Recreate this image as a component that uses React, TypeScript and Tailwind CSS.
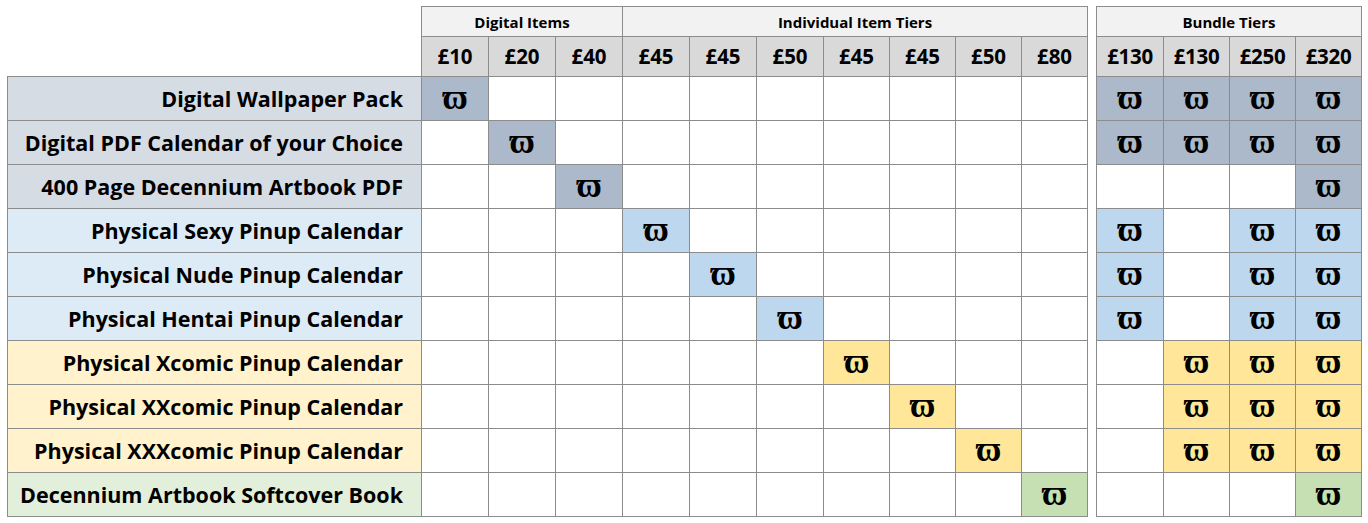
import React from "react";

type Tint = "d" | "b" | "y" | "g";

const labelBg: Record<Tint, string> = {
  d: "bg-[#d6dce4]",
  b: "bg-[#ddebf7]",
  y: "bg-[#fff2cc]",
  g: "bg-[#e2efda]",
};

const markBg: Record<Tint, string> = {
  d: "bg-[#acb9ca]",
  b: "bg-[#bdd7ee]",
  y: "bg-[#ffe699]",
  g: "bg-[#c6e0b4]",
};

const itemPrices = ["£10", "£20", "£40", "£45", "£45", "£50", "£45", "£45", "£50", "£80"];
const bundlePrices = ["£130", "£130", "£250", "£320"];
const itemWidths = [67, 67, 67, 67, 67, 67, 66, 66, 66, 67];
const bundleWidths = [67, 66, 66, 67];

const rows: { label: string; tint: Tint; bundles: boolean[] }[] = [
  { label: "Digital Wallpaper Pack", tint: "d", bundles: [true, true, true, true] },
  { label: "Digital PDF Calendar of your Choice", tint: "d", bundles: [true, true, true, true] },
  { label: "400 Page Decennium Artbook PDF", tint: "d", bundles: [false, false, false, true] },
  { label: "Physical Sexy Pinup Calendar", tint: "b", bundles: [true, false, true, true] },
  { label: "Physical Nude Pinup Calendar", tint: "b", bundles: [true, false, true, true] },
  { label: "Physical Hentai Pinup Calendar", tint: "b", bundles: [true, false, true, true] },
  { label: "Physical Xcomic Pinup Calendar", tint: "y", bundles: [false, true, true, true] },
  { label: "Physical XXcomic Pinup Calendar", tint: "y", bundles: [false, true, true, true] },
  { label: "Physical XXXcomic Pinup Calendar", tint: "y", bundles: [false, true, true, true] },
  { label: "Decennium Artbook Softcover Book", tint: "g", bundles: [false, false, false, true] },
];

const line = "border-[#8c8c8c]";

function Mark() {
  return (
    <span className="mb-[3px] font-['Liberation_Serif','DejaVu_Serif',serif] text-[35px] leading-none font-bold text-black">
      ϖ
    </span>
  );
}

function Cell({ w, bg, last, mark }: { w: number; bg: string; last?: boolean; mark?: boolean }) {
  return (
    <div
      className={`flex h-[44px] items-center justify-center border-b border-l ${line} ${bg} ${last ? "border-r" : ""}`}
      style={{ width: w }}
    >
      {mark && <Mark />}
    </div>
  );
}

export default function App() {
  return (
    <div className="h-[523px] w-[1368px] bg-white pl-[7px] pt-[6px] font-['Open_Sans','Lato',sans-serif] text-black">
      {/* group headings + prices */}
      <div className="flex">
        <div className={`h-[71px] w-[414px] border-b ${line}`} />
        <div className="flex flex-col">
          <div className="flex">
            <div className={`flex h-[31px] w-[201px] items-center justify-center border-t border-b border-l ${line} bg-[#f2f2f2] pt-[2px] text-[15px] font-bold`}>
              Digital Items
            </div>
            <div className={`flex h-[31px] w-[466px] items-center justify-center border-t border-b border-l border-r ${line} bg-[#f2f2f2] pt-[2px] text-[15px] font-bold`}>
              Individual Item Tiers
            </div>
          </div>
          <div className="flex">
            {itemPrices.map((p, i) => (
              <div
                key={i}
                className={`flex h-[40px] items-center justify-center border-b border-l ${line} bg-[#d9d9d9] text-[20.5px] font-bold ${i === 9 ? "border-r" : ""}`}
                style={{ width: itemWidths[i] }}
              >
                {p}
              </div>
            ))}
          </div>
        </div>
        <div className="w-[8px]" />
        <div className="flex flex-col">
          <div className={`flex h-[31px] w-[266px] items-center justify-center border-t border-b border-l border-r ${line} bg-[#f2f2f2] pt-[2px] text-[15px] font-bold`}>
            Bundle Tiers
          </div>
          <div className="flex">
            {bundlePrices.map((p, i) => (
              <div
                key={i}
                className={`flex h-[40px] items-center justify-center border-b border-l ${line} bg-[#d9d9d9] text-[20.5px] tracking-[-0.3px] font-bold ${i === 3 ? "border-r" : ""}`}
                style={{ width: bundleWidths[i] }}
              >
                {p}
              </div>
            ))}
          </div>
        </div>
      </div>

      {/* item rows */}
      {rows.map((r, ri) => (
        <div key={ri} className="flex">
          <div
            className={`flex h-[44px] w-[414px] items-center justify-end border-b border-l ${line} ${labelBg[r.tint]} pt-[2px] pr-[18px] text-[21.5px] font-bold`}
          >
            {r.label}
          </div>
          {itemWidths.map((w, ci) => (
            <Cell
              key={ci}
              w={w}
              last={ci === 9}
              mark={ci === ri}
              bg={ci === ri ? markBg[r.tint] : "bg-white"}
            />
          ))}
          <div className="w-[8px]" />
          {bundleWidths.map((w, ci) => (
            <Cell
              key={ci}
              w={w}
              last={ci === 3}
              mark={r.bundles[ci]}
              bg={r.bundles[ci] ? markBg[r.tint] : "bg-white"}
            />
          ))}
        </div>
      ))}
    </div>
  );
}
